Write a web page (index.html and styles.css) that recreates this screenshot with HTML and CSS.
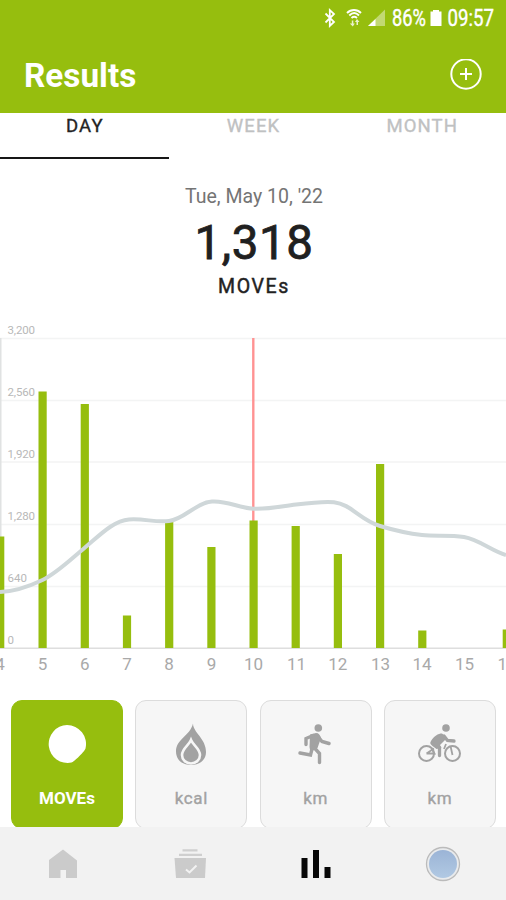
FILE: index.html
```html
<!DOCTYPE html>
<html lang="en">
<head>
<meta charset="utf-8">
<title>Results</title>
<link rel="stylesheet" href="styles.css">
</head>
<body>
<div class="app">
  <header class="header">
    <svg class="status" viewBox="0 0 506 36" aria-label="Status bar">
      <path d="M325.500 13.500l8.500 8.500-4.200 4V10l4.200 4-8.500 8.500" fill="none" stroke="#fff" stroke-width="1.800"/>
      <g fill="none" stroke="#fff" stroke-width="1.900">
        <path d="M347 13c4-4 10-4 14 0"/><path d="M349.300 15.500c3-3 6.700-3 9.700 0"/><path d="M351.500 18c2-1.700 3.500-1.700 5.500 0"/>
      </g>
      <path d="M351.800 20.500v3h-2l3 3 2-3h-1.500v-3zM356.500 25v-3h-1.500l2-3 2.500 3h-1.500v3z" fill="#fff" fill-opacity=".8"/>
      <path d="M385 9.500V26h-17z" fill="#fff" fill-opacity=".42"/>
      <path d="M375.500 19v7H368z" fill="#fff"/>
      <text class="status-text" x="392" y="25.800" textLength="34" lengthAdjust="spacingAndGlyphs">86%</text>
      <path d="M433 10h6v1.500h2.500V26h-11V11.500h2.500z" fill="#fff"/>
      <text class="status-text" x="447.500" y="25.800" textLength="46.500" lengthAdjust="spacingAndGlyphs">09:57</text>
    </svg>
    <div class="title-row">
      <h1>Results</h1>
      <svg class="add" viewBox="0 0 32 32"><circle cx="16" cy="15" r="14.700"/><path d="M16 9v12M10 15h12"/></svg>
    </div>
  </header>
  <nav class="tabs">
    <span class="tab active">DAY</span><span class="tab">WEEK</span><span class="tab">MONTH</span>
  </nav>
  <section class="summary">
    <div class="date">Tue, May 10, '22</div>
    <div class="total">1,318</div>
    <div class="unit">MOVEs</div>
  </section>
  <svg class="chart" viewBox="0 310 506 375">
    <path class="grid" d="M0 338.500H506M0 400.500H506M0 462H506M0 524.500H506M0 586.500H506"/>
    <path class="axis-y" d="M.75 338V648"/>
    <path class="axis-x" d="M0 648.300H506"/>
    <path class="marker" d="M253.300 338V521"/>
    <g class="bars">
      <rect x="-4" y="536.500" width="8.300" height="111.500"/>
      <rect x="38.500" y="391.500" width="8.200" height="256.500"/>
      <rect x="80.700" y="404" width="8.200" height="244"/>
      <rect x="122.900" y="615.500" width="8.200" height="32.500"/>
      <rect x="165.100" y="522" width="8.200" height="126"/>
      <rect x="207.300" y="547" width="8.200" height="101"/>
      <rect x="249.500" y="520.500" width="8.200" height="127.500"/>
      <rect x="291.600" y="526" width="8.200" height="122"/>
      <rect x="333.800" y="554" width="8.200" height="94"/>
      <rect x="376" y="464" width="8.200" height="184"/>
      <rect x="418.200" y="630.500" width="8.200" height="17.500"/>
      <rect x="502.700" y="629.500" width="8.200" height="18.500"/>
    </g>
    <path class="trend" d="M0 592C14 591.500 28 587 42.500 580S70 560 85 547.500S113 521 129 519.500C145 518.500 154 522.500 169 521S196 502.500 212 501.500S238 508 253.500 508.700S280 506.500 296 504.500S324 501 334 502.200C351 504 360 520 380 526S408 533.500 422 535S449 534.500 464 537S492 551 506 555"/>
    <g class="y-labels">
      <text x="7.500" y="334" textLength="27.500">3,200</text><text x="7.500" y="396" textLength="27.500">2,560</text><text x="7.500" y="458" textLength="27.500">1,920</text><text x="7.500" y="520" textLength="27.500">1,280</text><text x="7.500" y="582" textLength="19.500">640</text><text x="7.500" y="644">0</text>
    </g>
    <g class="x-labels">
      <text x="0" y="670">4</text><text x="42.500" y="670">5</text><text x="84.700" y="670">6</text><text x="127" y="670">7</text><text x="169" y="670">8</text><text x="211.500" y="670">9</text><text x="253.500" y="670">10</text><text x="296.500" y="670">11</text><text x="337.800" y="670">12</text><text x="380.500" y="670">13</text><text x="422" y="670">14</text><text x="464.500" y="670">15</text><text x="507" y="670">16</text>
    </g>
  </svg>
  <section class="cards">
    <div class="card selected">
      <svg viewBox="0 0 48 48"><path d="M24 5a19 19 0 1 0 4.500 37.600C31 42 42 31 42.500 28.500A19 19 0 0 0 24 5z" fill="#fff"/></svg>
      <span>MOVEs</span>
    </div>
    <div class="card">
      <svg viewBox="0 0 48 48"><path d="M26 3.500c0 9 13 15 13 28.500 0 8.300-6.700 13-15 13S9 40 9 31.500C9 19 23 16 26 3.500z" fill="#a2a2a2"/><path d="M24 20c-2 5-9 8.500-9 15a9 8.500 0 0 0 18 0c0-6.500-7-10-9-15z" fill="#a2a2a2" stroke="#f6f6f6" stroke-width="2.600"/></svg>
      <span>kcal</span>
    </div>
    <div class="card">
      <svg viewBox="0 0 48 48"><circle cx="26.300" cy="8" r="3.800" fill="#a2a2a2"/><path d="M18 14.500l6-1.500c3 0 4 2 5 5l-3.500 10-7 4-1-5z" fill="#a2a2a2"/><path d="M21 15.500l-7 3v6M26 16.500l4 5 7 2M20.500 27l-2 8-10.500-2M22.500 28l5 5.500v9" fill="none" stroke="#a2a2a2" stroke-width="3.400" stroke-linecap="round"/></svg>
      <span>km</span>
    </div>
    <div class="card">
      <svg viewBox="0 0 48 48"><circle cx="30" cy="8" r="3.800" fill="#a2a2a2"/><g fill="none" stroke="#a2a2a2"><circle cx="10.500" cy="33.500" r="7.500" stroke-width="2"/><circle cx="36.500" cy="33.500" r="7.500" stroke-width="2"/><path d="M10.500 33.500l7.500-5M10.500 33.500h8l-3-5M28 29l2-5M36.500 35l-2-9" stroke-width="1.800"/><path d="M28 16l3.500 4.500 6.500.5M18.500 24l5 3.500v8" stroke-width="3.300" stroke-linecap="round"/></g><path d="M15 21c3-5 7-7.500 11-7.500l3 2.500v4l-5 5 1.500 3-5 1-4-3c-2-1.500-3-3-1.500-5z" fill="#a2a2a2"/></svg>
      <span>km</span>
    </div>
  </section>
  <nav class="bottom">
    <svg viewBox="0 0 48 48"><path d="M10 20L24 9.500 38 20.500V38H27v-8h-5.500v8H10z" fill="#cbcbcb"/></svg>
    <svg viewBox="0 0 48 48"><path d="M16.500 10.300h15M13 14.800h23" stroke="#cfcfcf" stroke-width="2.200"/><path d="M8.500 18h31.500L39 38H10z" fill="#cbcbcb"/><path d="M20 29.500l3.500 3 7-7" fill="none" stroke="#f2f2f2" stroke-width="2"/></svg>
    <svg viewBox="0 0 48 48"><path d="M9.500 18h6v20h-6zM21 10h6v28h-6zM32.500 27h6v11h-6z" fill="#080808"/></svg>
    <svg viewBox="0 0 48 48"><defs><linearGradient id="sky" x2="0" y2="1"><stop stop-color="#9bb4d6"/><stop offset="1" stop-color="#b1c9e3"/></linearGradient></defs><circle cx="24" cy="24" r="16.500" fill="#e9ebed" stroke="#bbb" stroke-width="1.300"/><circle cx="24" cy="24" r="14" fill="url(#sky)"/></svg>
  </nav>
</div>
</body>
</html>
```

FILE: styles.css
```css
* { box-sizing: border-box; }
body { margin: 0; font-family: Roboto, "Liberation Sans", sans-serif; background: #fff; }
.app { width: 506px; height: 900px; overflow: hidden; display: flex; flex-direction: column; }
.header { height: 113px; flex: none; background: #96be0e; color: #fff; }
.status { display: block; width: 506px; height: 36px; }
.status-text { font-size: 23px; font-weight: 400; fill: #fff; stroke: #fff; stroke-width: .4px; }
.title-row { height: 77px; padding: 0 24px; display: flex; align-items: center; justify-content: space-between; }
h1 { margin: 0; padding-top: 2px; font-size: 33.3px; line-height: 40px; font-weight: 700; }
.add { width: 32px; height: 32px; fill: none; stroke: #fff; stroke-width: 2; }
.tabs { height: 46px; flex: none; display: grid; grid-template-columns: repeat(3, 1fr); }
.tab { padding: 2px 0 0 1px; text-align: center; font-size: 18.5px; line-height: 23px; font-weight: 400; -webkit-text-stroke: .35px; letter-spacing: 1.1px; color: #bfc1c2; }
.tab.active { color: #242424; border-bottom: 2px solid #171717; }
.summary { height: 151px; flex: none; padding: 25px 0 0 2px; text-align: center; }
.date { font-size: 19.5px; line-height: 26px; color: #747474; }
.total { font-size: 47.5px; line-height: 66px; font-weight: 400; -webkit-text-stroke: .8px; letter-spacing: .6px; color: #202020; }
.unit { font-size: 19.5px; line-height: 22px; font-weight: 400; -webkit-text-stroke: .45px; letter-spacing: 1.6px; color: #222; }
.chart { width: 506px; height: 375px; flex: none; display: block; }
.grid { stroke: #f3f4f4; stroke-width: 1.5; }
.axis-y { stroke: #e0e2e2; stroke-width: 1.5; }
.axis-x { stroke: #dedede; stroke-width: 1.5; }
.marker { stroke: #ff9292; stroke-width: 2.4; }
.bars { fill: #96be0e; }
.trend { fill: none; stroke: #cfd7d9; stroke-width: 4; }
.y-labels { fill: #b8b8b8; font-size: 11.5px; }
.x-labels { fill: #a9a9a9; font-size: 17px; text-anchor: middle; }
.cards { height: 142px; flex: none; padding: 15px 10px 0 11px; display: grid; grid-template-columns: repeat(4, 112px); justify-content: space-between; }
.card { height: 129px; border: 1.5px solid #dcdcdc; border-radius: 11px; background: #f6f6f6; display: flex; flex-direction: column; align-items: center; padding-top: 19px; color: #a2a2a2; font-size: 17px; line-height: 22px; font-weight: 400; -webkit-text-stroke: .35px; letter-spacing: .6px; }
.card svg { width: 48px; height: 48px; margin-bottom: 19px; }
.card.selected { background: #96be0e; border-color: #96be0e; color: #fff; font-weight: 700; -webkit-text-stroke: 0; letter-spacing: 0; }
.bottom { position: relative; height: 73px; flex: none; background: #f2f2f2; display: grid; grid-template-columns: repeat(4, 1fr); justify-items: center; align-items: center; }
.bottom svg { width: 48px; height: 48px; }
```
